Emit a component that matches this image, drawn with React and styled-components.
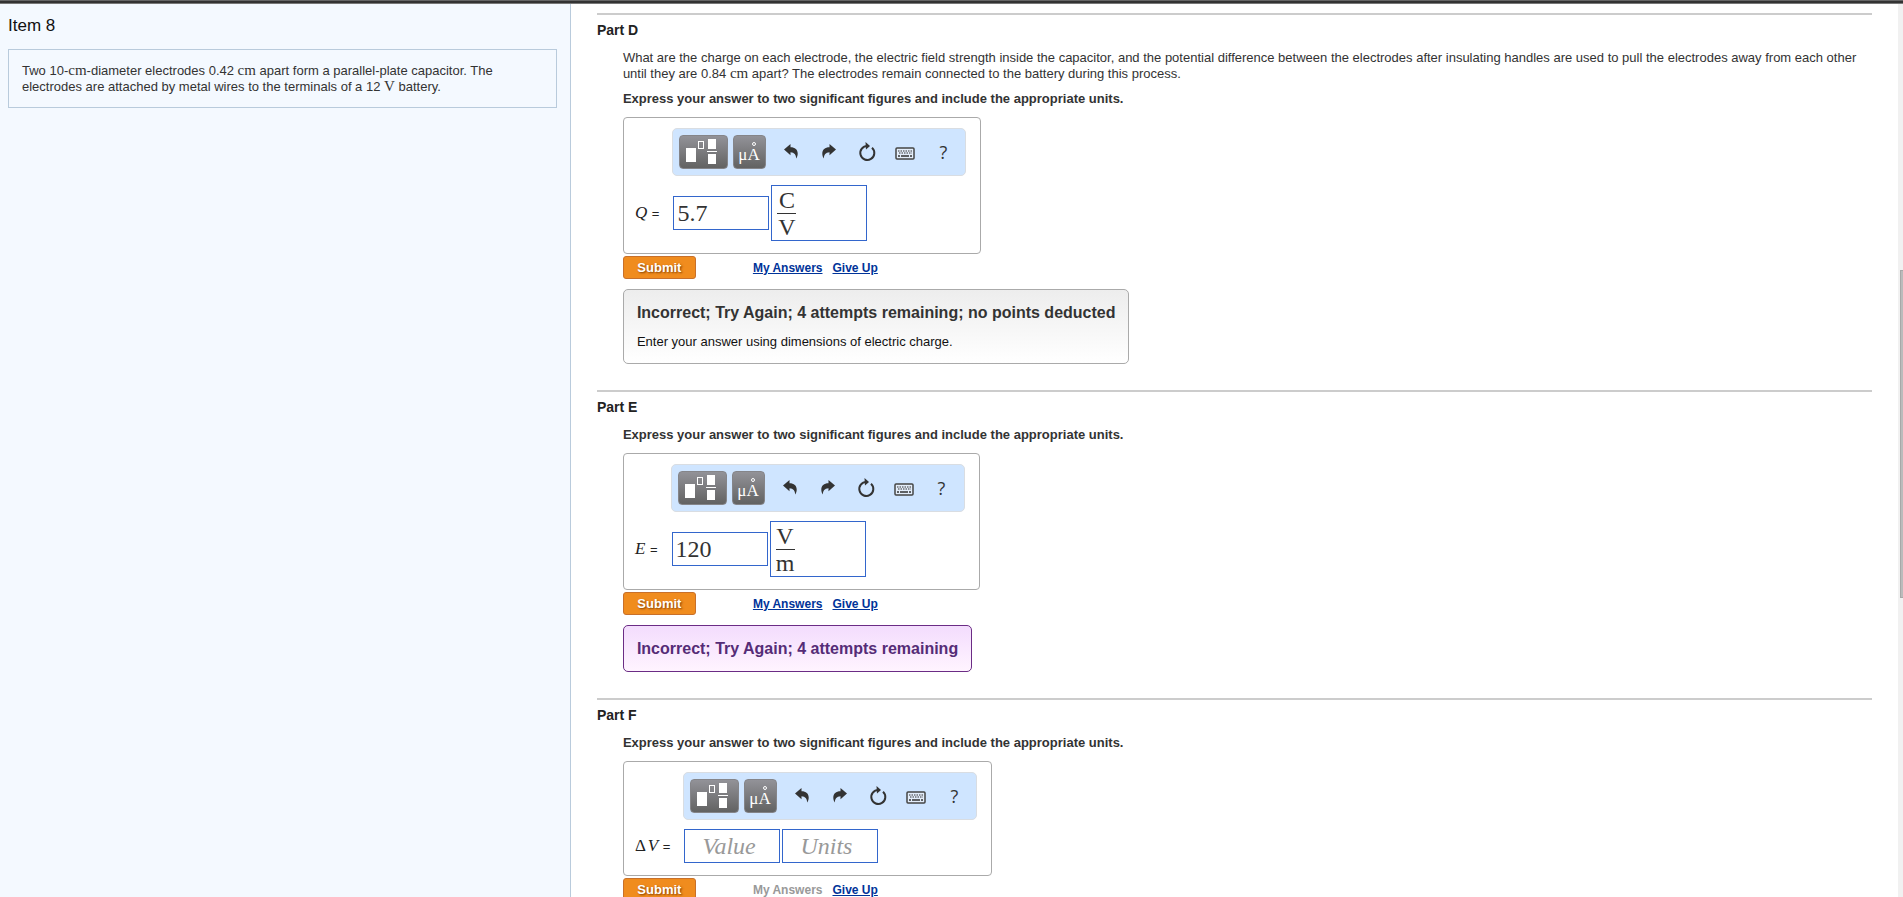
import React from "react";
import styled, { createGlobalStyle } from "styled-components";

const GlobalStyle = createGlobalStyle`
  * {
    box-sizing: border-box;
  }
  html, body {
    margin: 0;
    height: 100%;
    overflow: hidden;
  }
  #root {
    height: 100%;
  }
  body {
    background: #fff;
    color: #333;
    font: 13px/16px "Liberation Sans", Arial, sans-serif;
  }
`;

const serif = `"Liberation Serif", "Times New Roman", serif`;

const Page = styled.div`
  display: flex;
  flex-direction: column;
  height: 100vh;
`;

const TopBar = styled.header`
  flex: none;
  height: 4px;
  background: linear-gradient(#666 0 1px, #333 1px 3px, #777 3px);
`;

const Columns = styled.div`
  display: flex;
  flex: 1;
  min-height: 0;
`;

const ItemPanel = styled.aside`
  flex: none;
  width: 30%;
  padding: 12px 13px 0 8px;
  background: #f4f9ff;
  border-right: 1px solid #b9cbdc;
`;

const ItemTitle = styled.h1`
  margin: 0 0 13px;
  color: #111;
  font-size: 17px;
  line-height: 20px;
  font-weight: normal;
`;

const ItemText = styled.div`
  padding: 13px 13px 12px;
  border: 1px solid #b9cbdc;
`;

const Parts = styled.main`
  flex: 1;
  min-width: 0;
  overflow: hidden;
  padding: 9px 26px 0;
`;

const PartSection = styled.section`
  margin-bottom: 26px;
  border-top: 2px solid #ccc;
`;

const PartTitle = styled.h2`
  margin: 0;
  padding: 7px 0 12px;
  color: #222;
  font-size: 14px;
  line-height: 16px;
`;

const PartBody = styled.div`
  padding-left: 26px;
`;

const Question = styled.p`
  margin: 0 0 9px;
`;

const Instructions = styled.p`
  margin: 0 0 10px;
  font-weight: bold;
`;

const Unit = styled.span`
  font-family: ${serif};
  font-size: 15px;
  line-height: 1;
`;

const AnswerBox = styled.form`
  display: grid;
  grid-template-columns: auto auto;
  width: fit-content;
  padding: 10px 14px 12px 11px;
  border: 1px solid #aaa;
  border-radius: 4px;
  column-gap: 13px;
  row-gap: 9px;
`;

const Toolbar = styled.div`
  grid-column: 2;
  display: flex;
  align-items: center;
  gap: 5px;
  width: 294px;
  height: 48px;
  padding: 0 3px 0 6px;
  background: #cfe5ff;
  border: 1px solid #d9dde2;
  border-radius: 5px;
`;

const DarkButton = styled.button`
  flex: none;
  width: ${(props) => props.$width};
  height: 34px;
  padding: 0;
  border: 1px solid #858589;
  border-radius: 4px;
  background: linear-gradient(#929298, #626262);

  svg {
    display: block;
  }
`;

const IconGroup = styled.div`
  display: flex;
  padding-left: 1px;
`;

const ToolButton = styled.button`
  display: flex;
  align-items: center;
  justify-content: center;
  width: 38px;
  height: 34px;
  padding: 0;
  border: 0;
  background: none;
  color: #333;
  font: 18px "Open Sans", Arial, sans-serif;
`;

const Symbol = styled.label`
  align-self: center;
  color: #222;
  white-space: nowrap;
`;

const Variable = styled.i`
  margin-right: 1px;
  font-family: ${serif};
  font-size: 17px;
`;

const Delta = styled.span`
  margin-right: 2px;
  font-family: ${serif};
  font-size: 17px;
`;

const Fields = styled.div`
  display: flex;
  align-items: center;
  gap: 2px;
  padding-left: 1px;
`;

const Field = styled.input`
  width: 96px;
  height: 34px;
  padding: 0 3px;
  border: 1px solid #36c;
  border-radius: 0;
  outline: 0;
  background: #fff;
  color: #333;
  font: 24px ${serif};

  &:placeholder-shown {
    padding-left: 17px;
  }

  &::placeholder {
    color: #999;
    opacity: 1;
    font-style: italic;
  }
`;

const FractionField = styled.div`
  display: flex;
  align-items: center;
  width: 96px;
  height: 56px;
  padding: 0 5px;
  border: 1px solid #36c;
  color: #333;
  font: 24px/26px ${serif};
`;

const Fraction = styled.div`
  min-width: 19px;
  text-align: center;

  div + div {
    border-top: 1px solid #333;
  }
`;

const Actions = styled.div`
  display: flex;
  align-items: center;
  margin: 2px 0 10px;
  font-size: 12px;
  font-weight: bold;
`;

const Submit = styled.button`
  width: 73px;
  height: 23px;
  margin-right: 57px;
  padding: 0;
  border: 1px solid #c8702a;
  border-radius: 3px;
  background: #f08c1e;
  color: #fff;
  font: bold 13px "Liberation Sans", Arial, sans-serif;
  text-shadow: 1px 1px 2px #843f00;
`;

const Link = styled.a`
  margin-right: 10px;
  color: #039;
`;

const DisabledLink = styled.span`
  margin-right: 10px;
  color: #999;
`;

const Feedback = styled.div`
  width: fit-content;
  padding: 14px 13px 13px;
  border: 1px solid ${(props) => (props.$wrong ? "#6b2c85" : "#aaa")};
  border-radius: 5px;
  background: ${(props) =>
    props.$wrong
      ? "linear-gradient(#f3dcfd, #fff4ff)"
      : "linear-gradient(#ededed, #fff)"};
  color: ${(props) => (props.$wrong ? "#552c77" : "#333")};

  h3 {
    margin: 0;
    font-size: 16px;
    line-height: 18px;
  }

  p {
    margin: 12px 0 0;
    color: #111;
  }
`;

const Scrollbar = styled.div`
  flex: none;
  width: 5px;
  padding: 266px 0 0 2px;
  background: #f1f1f1;
`;

const ScrollThumb = styled.div`
  height: 328px;
  background: #bbb;
  border: 1px solid #a8a8a8;
  border-right: 0;
`;

const TemplatesIcon = () => (
  <svg width="47" height="32" viewBox="0 0 47 32" fill="#fff">
    <rect x="6" y="12" width="10" height="14" />
    <rect x="18.5" y="5.500" width="5" height="7" fill="none" stroke="#fff" />
    <rect x="28" y="3" width="8" height="10" />
    <rect x="27" y="15" width="10" height="1" />
    <rect x="28" y="18" width="8" height="10" />
  </svg>
);

const SymbolsIcon = () => (
  <svg width="31" height="32" viewBox="0 0 31 32">
    <text x="15" y="24" textAnchor="middle" fill="#fff" fontFamily="Liberation Serif" fontSize="17">
      μA
    </text>
    <circle cx="20" cy="8" r="1.5" fill="none" stroke="#fff" />
  </svg>
);

const UndoIcon = () => (
  <svg width="14" height="18" viewBox="0 0 14 18" fill="#333">
    <path d="M0 6.500 6.500 1v3.200C11 4.200 13.700 6.500 13.700 10.500c0 2-.6 3.700-1.500 5C12 12 10.500 9.500 6.500 9.300v3z" />
  </svg>
);

const RedoIcon = () => (
  <svg width="14" height="18" viewBox="0 0 14 18" fill="#333">
    <path d="M14 6.500 7.500 1v3.200C3 4.200.3 6.500.3 10.500c0 2 .6 3.700 1.500 5C2 12 3.500 9.500 7.500 9.300v3z" />
  </svg>
);

const ResetIcon = () => (
  <svg width="18" height="20" viewBox="0 0 18 20">
    <path d="M14 5.800A7 7 0 1 1 9.500 4" fill="none" stroke="#333" strokeWidth="2" />
    <path d="M7.500 0 12 4 8 7.500z" fill="#333" />
  </svg>
);

const KeyboardIcon = () => (
  <svg width="20" height="16" viewBox="0 0 20 16">
    <rect x="1" y="4" width="18" height="11" rx="1" fill="#e3edfa" stroke="#444" strokeWidth="1.500" />
    <path d="M3 7h14M4 9h13" stroke="#333" strokeDasharray="1.500 1" />
    <path d="M3 12h2M6 12h8M15 12h2" stroke="#333" strokeWidth="1.500" />
  </svg>
);

const FormatToolbar = () => (
  <Toolbar>
    <DarkButton type="button" $width="49px" aria-label="Templates">
      <TemplatesIcon />
    </DarkButton>
    <DarkButton type="button" $width="33px" aria-label="Symbols">
      <SymbolsIcon />
    </DarkButton>
    <IconGroup>
      <ToolButton type="button" aria-label="Undo">
        <UndoIcon />
      </ToolButton>
      <ToolButton type="button" aria-label="Redo">
        <RedoIcon />
      </ToolButton>
      <ToolButton type="button" aria-label="Reset">
        <ResetIcon />
      </ToolButton>
      <ToolButton type="button" aria-label="Keyboard">
        <KeyboardIcon />
      </ToolButton>
      <ToolButton type="button" aria-label="Help">?</ToolButton>
    </IconGroup>
  </Toolbar>
);

const Part = ({ name, question, symbol, value, units, tried, children }) => (
  <PartSection>
    <PartTitle>Part {name}</PartTitle>
    <PartBody>
      {question && <Question>{question}</Question>}
      <Instructions>
        Express your answer to two significant figures and include the
        appropriate units.
      </Instructions>
      <AnswerBox>
        <FormatToolbar />
        <Symbol htmlFor={`value-${name}`}>{symbol} =</Symbol>
        <Fields>
          <Field id={`value-${name}`} defaultValue={value} placeholder="Value" />
          {units ? (
            <FractionField>
              <Fraction>
                <div>{units[0]}</div>
                <div>{units[1]}</div>
              </Fraction>
            </FractionField>
          ) : (
            <Field aria-label="Units" placeholder="Units" />
          )}
        </Fields>
      </AnswerBox>
      <Actions>
        <Submit type="button">Submit</Submit>
        {tried ? (
          <Link href="#answers">My Answers</Link>
        ) : (
          <DisabledLink>My Answers</DisabledLink>
        )}
        <Link href="#giveup">Give Up</Link>
      </Actions>
      {children}
    </PartBody>
  </PartSection>
);

const App = () => (
  <Page>
    <GlobalStyle />
    <TopBar />
    <Columns>
      <ItemPanel>
        <ItemTitle>Item 8</ItemTitle>
        <ItemText>
          Two 10-<Unit>cm</Unit>-diameter electrodes 0.42 <Unit>cm</Unit> apart
          form a parallel-plate capacitor. The electrodes are attached by metal
          wires to the terminals of a 12 <Unit>V</Unit> battery.
        </ItemText>
      </ItemPanel>
      <Parts>
        <Part
          name="D"
          question={
            <>
              What are the charge on each electrode, the electric field
              strength inside the capacitor, and the potential difference
              between the electrodes after insulating handles are used to pull
              the electrodes away from each other until they are 0.84{" "}
              <Unit>cm</Unit> apart? The electrodes remain connected to the
              battery during this process.
            </>
          }
          symbol={<Variable>Q</Variable>}
          value="5.7"
          units={["C", "V"]}
          tried
        >
          <Feedback>
            <h3>
              Incorrect; Try Again; 4 attempts remaining; no points deducted
            </h3>
            <p>Enter your answer using dimensions of electric charge.</p>
          </Feedback>
        </Part>
        <Part
          name="E"
          symbol={<Variable>E</Variable>}
          value="120"
          units={["V", "m"]}
          tried
        >
          <Feedback $wrong>
            <h3>Incorrect; Try Again; 4 attempts remaining</h3>
          </Feedback>
        </Part>
        <Part
          name="F"
          symbol={
            <>
              <Delta>Δ</Delta>
              <Variable>V</Variable>
            </>
          }
        />
      </Parts>
      <Scrollbar>
        <ScrollThumb />
      </Scrollbar>
    </Columns>
  </Page>
);

export default App;
